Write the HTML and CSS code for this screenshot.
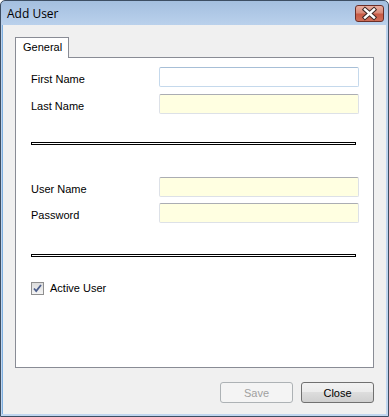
FILE: index.html
```html
<!DOCTYPE html>
<html lang="en">
<head>
    <meta charset="UTF-8">
    <title>Add User</title>
    <link rel="stylesheet" href="styles.css">
</head>
<body>
    <div class="window">
        <div class="titlebar">
            <span class="title">Add User</span>
            <span class="close-box">
                <svg width="27" height="15" viewBox="0 0 27 15">
                    <path d="M9 3.5 L18 11.5 M18 3.5 L9 11.5" stroke="#3b2622" stroke-width="4.4" stroke-linecap="square" fill="none"/>
                    <path d="M9 3.5 L18 11.5 M18 3.5 L9 11.5" stroke="#ffffff" stroke-width="2.4" stroke-linecap="square" fill="none"/>
                </svg>
            </span>
        </div>

        <div class="client">
            <div class="tabs">
                <div class="tab-strip">
                    <div class="tab active">General</div>
                </div>
                <div class="tab-page">
                    <div class="field">
                        <label>First Name</label>
                        <input type="text" class="focused">
                    </div>
                    <div class="field gap-small">
                        <label>Last Name</label>
                        <input type="text" class="required">
                    </div>

                    <div class="separator sep-one"></div>

                    <div class="field after-sep">
                        <label>User Name</label>
                        <input type="text" class="required">
                    </div>
                    <div class="field gap-smaller">
                        <label>Password</label>
                        <input type="password" class="required">
                    </div>

                    <div class="separator sep-two"></div>

                    <div class="check-row">
                        <span class="checkbox">
                            <svg width="13" height="13" viewBox="0 0 13 13">
                                <path d="M3 6.5 L5.2 9 L10 3" stroke="#4c5e8c" stroke-width="1.8" fill="none"/>
                            </svg>
                        </span>
                        <span class="check-label">Active User</span>
                    </div>
                </div>
            </div>

            <div class="buttons">
                <button disabled>Save</button>
                <button>Close</button>
            </div>
        </div>
    </div>
</body>
</html>
```

FILE: styles.css
```css
body {
    margin: 0;
    font-family: "Liberation Sans", Arial, sans-serif;
    font-size: 11px;
    background-color: #ffffff;
}
.window {
    width: 389px;
    height: 417px;
    box-sizing: border-box;
    border: 1px solid #3d4e63;
    border-radius: 5px 5px 0 0;
    background: linear-gradient(#a4bfdf 0px, #bad1ec 24px, #c0d6ef 100%);
    display: flex;
    flex-direction: column;
}
.titlebar {
    height: 24px;
    display: flex;
    align-items: flex-start;
    justify-content: space-between;
    flex-shrink: 0;
}
.title {
    font-family: "Open Sans", "Liberation Sans", sans-serif;
    font-size: 12px;
    line-height: 16px;
    margin-top: 5px;
    margin-left: 6px;
    color: #000000;
}
.close-box {
    width: 27px;
    height: 15px;
    margin-top: 4px;
    margin-right: 4px;
    border: 1px solid #6b2e27;
    border-radius: 3px;
    background: linear-gradient(#e9ad9f 0%, #d98b79 45%, #c85a45 55%, #cf6e58 100%);
    display: flex;
}
.client {
    flex: 1;
    margin: 0 2px 2px 2px;
    background-color: #f0f0f0;
    padding: 12px 12px 0 12px;
    border-left: 1px solid #7fb0e0;
    margin-left: 1px;
}
.tabs {
    width: 359px;
}
.tab-strip {
    height: 20px;
    display: flex;
}
.tab {
    width: 54px;
    height: 21px;
    box-sizing: border-box;
    border: 1px solid #898c95;
    border-bottom: none;
    background-color: #ffffff;
    padding-left: 7px;
    line-height: 19px;
    position: relative;
    z-index: 1;
}
.tab-page {
    height: 311px;
    box-sizing: border-box;
    border: 1px solid #898c95;
    background-color: #ffffff;
    padding: 9px 0 0 15px;
}
.field {
    display: flex;
    height: 20px;
}
.field label {
    width: 128px;
    padding-top: 6px;
    line-height: 13px;
    color: #000000;
}
.field input {
    width: 200px;
    height: 20px;
    box-sizing: border-box;
    margin: 0;
    padding: 0;
    border: 1px solid #dde1e7;
    border-top-color: #abadb3;
    border-radius: 2px;
    appearance: none;
    outline: none;
}
.field input.focused {
    background-color: #ffffff;
    border-color: #c5d9ec;
    border-top-color: #a7bfd7;
}
.field input.required {
    background-color: #ffffe1;
}
.gap-small {
    margin-top: 7px;
}
.gap-smaller {
    margin-top: 6px;
}
.separator {
    width: 325px;
    height: 3px;
    box-sizing: border-box;
    border: 1px solid #000000;
    background-color: #ffffff;
}
.sep-one {
    margin-top: 28px;
}
.after-sep {
    margin-top: 32px;
}
.sep-two {
    margin-top: 31px;
}
.check-row {
    display: flex;
    align-items: center;
    margin-top: 25px;
    height: 13px;
}
.checkbox {
    width: 13px;
    height: 13px;
    box-sizing: border-box;
    border: 1px solid #8f8f8f;
    background: linear-gradient(#dcdcdc, #f4f4f4);
    display: flex;
    align-items: center;
    justify-content: center;
}
.checkbox svg {
    flex-shrink: 0;
}
.check-label {
    margin-left: 6px;
    line-height: 13px;
}
.buttons {
    display: flex;
    justify-content: flex-end;
    gap: 8px;
    margin-top: 14px;
}
button {
    width: 73px;
    height: 21px;
    box-sizing: border-box;
    font-family: "Liberation Sans", Arial, sans-serif;
    font-size: 11px;
    color: #000000;
    border: 1px solid #707070;
    border-radius: 3px;
    background: linear-gradient(#f2f2f2 0%, #ebebeb 50%, #dddddd 50%, #cfcfcf 100%);
    padding: 0;
}
button:disabled {
    color: #a0a0a0;
    border-color: #adb2b5;
    background: #f4f4f4;
}
```
